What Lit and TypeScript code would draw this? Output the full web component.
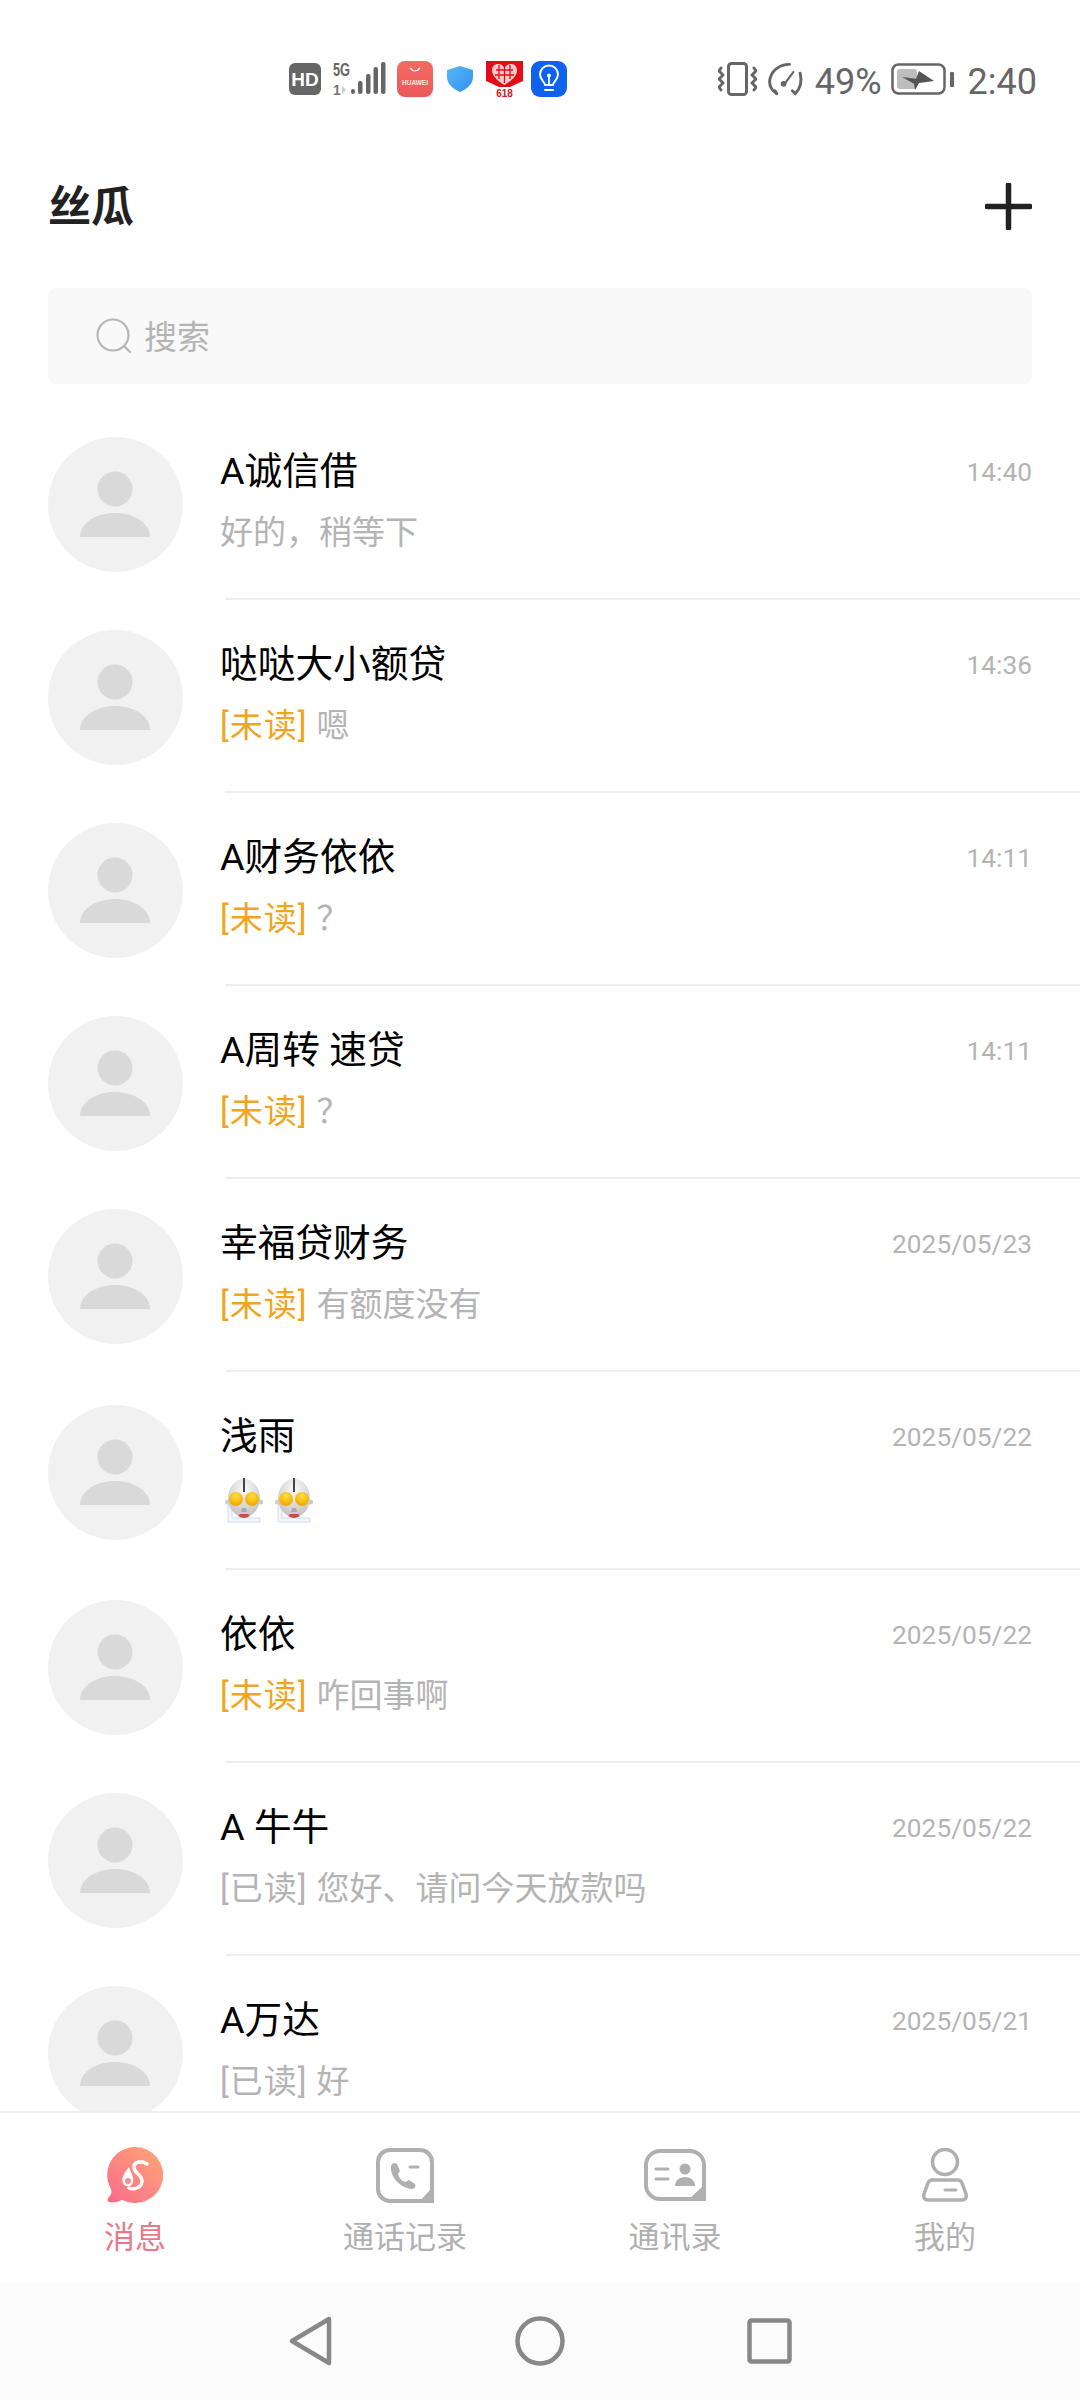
import { LitElement, html, css, svg, nothing } from 'lit';
import { customElement } from 'lit/decorators.js';

interface Chat {
  name: string;
  time: string;
  status?: 'unread' | 'read';
  text?: string;
  emoji?: boolean;
}

const chats: Chat[] = [
  { name: 'A诚信借', time: '14:40', text: '好的，稍等下' },
  { name: '哒哒大小额贷', time: '14:36', status: 'unread', text: '嗯' },
  { name: 'A财务依依', time: '14:11', status: 'unread', text: '？' },
  { name: 'A周转 速贷', time: '14:11', status: 'unread', text: '？' },
  { name: '幸福贷财务', time: '2025/05/23', status: 'unread', text: '有额度没有' },
  { name: '浅雨', time: '2025/05/22', emoji: true },
  { name: '依依', time: '2025/05/22', status: 'unread', text: '咋回事啊' },
  { name: 'A 牛牛', time: '2025/05/22', status: 'read', text: '您好、请问今天放款吗' },
  { name: 'A万达', time: '2025/05/21', status: 'read', text: '好' },
];

const avatar = html`<svg class="avatar" viewBox="0 0 135 135">
  <circle cx="67.5" cy="67.5" r="67.5" fill="#f1f1f1"></circle>
  <circle cx="67" cy="52" r="17.5" fill="#d9d9d9"></circle>
  <path d="M32 100c0-14 16-24 35-24s35 10 35 24z" fill="#d9d9d9"></path>
</svg>`;

const ultraman = svg`<svg class="emoji" viewBox="0 0 38 45">
  <defs>
    <radialGradient id="head" cx="50%" cy="25%" r="75%">
      <stop offset="0" stop-color="#fafafa"></stop>
      <stop offset="1" stop-color="#c2c2c2"></stop>
    </radialGradient>
    <radialGradient id="eye" cx="50%" cy="30%" r="65%">
      <stop offset="0" stop-color="#ffe040"></stop>
      <stop offset="1" stop-color="#f5a800"></stop>
    </radialGradient>
  </defs>
  <path d="M3 26h4v14h28v4H3z" fill="#f2f5fa" stroke="#c8d6ea" stroke-width="0.800"></path>
  <circle cx="2.500" cy="24" r="2.500" fill="#d0d0d0"></circle>
  <circle cx="35.500" cy="24" r="2.500" fill="#c8c8c8"></circle>
  <ellipse cx="19" cy="20" rx="16" ry="19" fill="url(#head)"></ellipse>
  <rect x="18" y="0" width="2" height="14" fill="#444"></rect>
  <circle cx="11" cy="21" r="7" fill="url(#eye)"></circle>
  <circle cx="27" cy="21" r="7" fill="url(#eye)"></circle>
  <path d="M17 30h4l1 4h-6z" fill="#aaa"></path>
  <path d="M13 38q6 4 12 0l-2-2h-8z" fill="#cf4a49"></path>
</svg>`;

@customElement('app-root')
export class AppRoot extends LitElement {
  static styles = css`
    :host {
      display: flex;
      flex-direction: column;
      width: 1080px;
      height: 2400px;
      overflow: hidden;
      background: #fff;
      font-family: 'Roboto', 'Noto Sans CJK SC', sans-serif;
    }
    svg {
      display: block;
      flex: none;
    }

    .status {
      display: flex;
      align-items: center;
      height: 158px;
      padding: 0 43px 0 289px;
      box-sizing: border-box;
      color: #666;
      font-size: 36px;
      flex: none;
    }
    .status-left {
      display: flex;
      align-items: center;
    }
    .signal {
      margin-left: 12px;
    }
    .huawei {
      margin-left: 11px;
    }
    .shield {
      margin-left: 14px;
    }
    .red {
      margin-left: 13px;
    }
    .bulb {
      margin-left: 8px;
    }
    .status-right {
      display: flex;
      align-items: center;
      margin-left: auto;
    }
    .gauge {
      margin-left: 11px;
    }
    .pct {
      margin: 5px 9px 0 10px;
    }
    .clock {
      margin: 5px 0 0 14px;
    }

    .title-row {
      display: flex;
      align-items: center;
      justify-content: space-between;
      height: 96px;
      padding: 0 48px;
      flex: none;
    }
    .title {
      font-size: 43px;
      font-weight: 700;
      color: #222;
      margin-bottom: 6px;
    }

    .search {
      display: flex;
      align-items: center;
      gap: 12px;
      height: 96px;
      margin: 34px 48px 0;
      padding-left: 48px;
      border-radius: 8px;
      background: #f9f9f9;
      color: #b4b4b4;
      font-size: 33px;
      flex: none;
    }
    .search span {
      margin-bottom: 3px;
    }

    .list {
      flex: 1;
      min-height: 0;
      overflow: hidden;
      margin-top: 23px;
    }
    .row {
      display: flex;
      align-items: center;
      padding: 30px 48px 28px;
      position: relative;
    }
    .row::after {
      content: '';
      position: absolute;
      left: 225px;
      right: 0;
      bottom: 0;
      height: 2px;
      background: #eeeeee;
    }
    .avatar {
      width: 135px;
      height: 135px;
    }
    .body {
      flex: 1;
      align-self: flex-start;
      margin: 4px 0 0 37px;
      min-width: 0;
    }
    .top {
      display: flex;
      justify-content: space-between;
      align-items: flex-start;
      height: 50px;
      line-height: 50px;
    }
    .name {
      margin-top: 5px;
      font-size: 37.7px;
      color: #000;
    }
    .time {
      margin-top: 6px;
      font-size: 26.3px;
      color: #b4b4b4;
    }
    .preview {
      height: 78px;
      display: flex;
      align-items: center;
      font-size: 33px;
      color: #b4b4b4;
      gap: 9px;
    }
    .tag {
      letter-spacing: 1px;
    }
    .preview.emoji-line {
      height: 64px;
      padding-top: 22px;
      align-items: flex-start;
      gap: 12px;
      margin-left: 5px;
    }
    .emoji {
      width: 38px;
      height: 45px;
    }
    .unread {
      color: #f0a51e;
    }

    .tabs {
      display: grid;
      grid-template-columns: repeat(4, 1fr);
      height: 170px;
      border-top: 2px solid #eeeeee;
      flex: none;
      box-sizing: content-box;
    }
    .tab {
      display: flex;
      flex-direction: column;
      align-items: center;
      color: #b0b0b0;
      font-size: 31px;
    }
    .tab .icon {
      height: 58px;
      margin-top: 33px;
      display: flex;
      align-items: center;
    }
    .tab .label {
      margin-top: 14px;
      line-height: 40px;
    }
    .tab.active {
      color: #e8788a;
    }

    .nav {
      display: flex;
      align-items: center;
      justify-content: center;
      gap: 182px;
      height: 117px;
      padding-bottom: 2px;
      box-sizing: border-box;
      background: #fbfbfb;
      flex: none;
    }
  `;

  renderStatusLeft() {
    return html`<div class="status-left">
      <svg width="32" height="32" viewBox="0 0 32 32">
        <rect width="32" height="32" rx="6" fill="#666"></rect>
        <text x="16" y="23" font-size="19" font-weight="700" fill="#fff" text-anchor="middle" font-family="Liberation Sans">HD</text>
      </svg>
      <svg class="signal" width="53" height="36" viewBox="0 0 53 36">
        <text x="0" y="15" font-size="18" font-weight="700" fill="#666" font-family="Liberation Sans" textLength="17" lengthAdjust="spacingAndGlyphs">5G</text>
        <text x="0" y="34" font-size="14" font-weight="700" fill="#777" font-family="Liberation Sans">1</text>
        <path d="M9 25l4 4-4 4z" fill="#ccc"></path>
        <rect x="18" y="28" width="4" height="5" rx="2" fill="#666"></rect>
        <rect x="25" y="20" width="4.500" height="13" rx="2" fill="#666"></rect>
        <rect x="33" y="13" width="4.500" height="20" rx="2" fill="#666"></rect>
        <rect x="40.500" y="6" width="4.500" height="27" rx="2" fill="#666"></rect>
        <rect x="48" y="1" width="4.500" height="32" rx="2" fill="#666"></rect>
      </svg>
      <svg class="huawei" width="36" height="36" viewBox="0 0 36 36">
        <defs>
          <linearGradient id="hw" x1="0" y1="0" x2="0" y2="1">
            <stop offset="0" stop-color="#f66a63"></stop>
            <stop offset="1" stop-color="#e9585a"></stop>
          </linearGradient>
        </defs>
        <rect width="36" height="36" rx="8" fill="url(#hw)"></rect>
        <path d="M13 7q5 6 10 0" fill="none" stroke="#fff" stroke-width="1.200"></path>
        <text x="18" y="24" font-size="6.500" font-weight="700" fill="#fde4e2" text-anchor="middle" font-family="Liberation Sans">HUAWEI</text>
      </svg>
      <svg class="shield" width="26" height="26" viewBox="8 6 26 26">
        <defs>
          <linearGradient id="sh" x1="0" y1="0" x2="1" y2="1">
            <stop offset="0" stop-color="#5cb8f6"></stop>
            <stop offset="1" stop-color="#2f8fef"></stop>
          </linearGradient>
        </defs>
        <path d="M21 6l13 4v7c0 7-6 12-13 15C14 29 8 24 8 17v-7z" fill="url(#sh)"></path>
      </svg>
      <svg class="red" width="37" height="36" viewBox="0 0 37 36">
        <path d="M0 0h37v20l-13 6h-11L0 20z" fill="#e30d18"></path>
        <path d="M18.500 24C10 19 6 14 6 9.500 6 5 9 3 12 3c3 0 5 1.500 6.500 4C20 4.500 22 3 25 3c3 0 6 2 6 6.500C31 14 27 19 18.500 24z" fill="#f7c9c9"></path>
        <path d="M18.500 5v17M10 9h17M9 14h19M13 4v14M24 4v14" stroke="#e30d18" stroke-width="1.300"></path>
        <text x="18.500" y="35.500" font-size="10" font-weight="700" fill="#d4141e" text-anchor="middle" font-family="Liberation Sans">618</text>
      </svg>
      <svg class="bulb" width="36" height="36" viewBox="0 0 36 36">
        <rect width="36" height="36" rx="9" fill="#0f62ee"></rect>
        <path d="M14 24c0-3-5-5-5-10.500a9 9 0 0 1 18 0C27 19 22 21 22 24z" fill="none" stroke="#fff" stroke-width="2" stroke-linejoin="round"></path>
        <path d="M14 29h8" stroke="#fff" stroke-width="2" stroke-linecap="round"></path>
        <path d="M18 23v-7" stroke="#fff" stroke-width="1.800"></path>
        <circle cx="18" cy="14.500" r="2" fill="#fff"></circle>
      </svg>
    </div>`;
  }

  renderStatusRight() {
    return html`<div class="status-right">
      <svg width="39" height="34" viewBox="0 0 39 34" fill="none" stroke="#666" stroke-width="3" stroke-linecap="round" stroke-linejoin="round">
        <rect x="10.500" y="1.500" width="18" height="31" rx="3"></rect>
        <path d="M3 6l-2 3 4 4-4 4 4 4-4 4 2 3"></path>
        <path d="M36 6l2 3-4 4 4 4-4 4 4 4-2 3"></path>
      </svg>
      <svg class="gauge" width="37" height="34" viewBox="0 0 38 34" fill="none" stroke="#666" stroke-width="3" stroke-linecap="round">
        <path d="M9 32C3 28 1 22 2 17 4 8 12 2 22 2"></path>
        <path d="M33 11c2 8 1 15-5 21l-3-3"></path>
        <path d="M9 32l-2-3"></path>
        <path d="M17 22L26 10" stroke-width="2.200"></path>
        <circle cx="16" cy="22" r="3" fill="#666" stroke="none"></circle>
      </svg>
      <span class="pct">49%</span>
      <svg width="63" height="32" viewBox="0 0 63 32">
        <rect x="1.500" y="1.500" width="52" height="29" rx="6" fill="none" stroke="#666" stroke-width="2.500"></rect>
        <rect x="6" y="6" width="20" height="20" rx="3" fill="#bdbdbd"></rect>
        <path d="M11 14l14 1.700 3-7.700 15 10-15 2-4 7-1-6.300z" fill="#555"></path>
        <rect x="59" y="9" width="4" height="15" rx="1" fill="#666"></rect>
      </svg>
      <span class="clock">2:40</span>
    </div>`;
  }

  renderChat(c: Chat) {
    return html`<div class="row">
      ${avatar}
      <div class="body">
        <div class="top">
          <span class="name">${c.name}</span>
          <span class="time">${c.time}</span>
        </div>
        ${c.emoji
          ? html`<div class="preview emoji-line">${ultraman}${ultraman}</div>`
          : html`<div class="preview">
              ${c.status === 'unread' ? html`<span class="tag unread">[未读]</span>` : nothing}
              ${c.status === 'read' ? html`<span class="tag">[已读]</span>` : nothing}
              <span>${c.text}</span>
            </div>`}
      </div>
    </div>`;
  }

  render() {
    return html`
      <div class="status">${this.renderStatusLeft()}${this.renderStatusRight()}</div>

      <div class="title-row">
        <span class="title">丝瓜</span>
        <svg width="47" height="47" viewBox="0 0 47 47">
          <path d="M23.500 2v43M2 23.500h43" stroke="#222" stroke-width="5.500" stroke-linecap="round"></path>
        </svg>
      </div>

      <div class="search">
        <svg width="36" height="36" viewBox="0 0 36 36" fill="none" stroke="#b6b6b6" stroke-width="2.200">
          <circle cx="17" cy="17" r="15.500"></circle>
          <path d="M28 28l6 6" stroke-linecap="round"></path>
        </svg>
        <span>搜索</span>
      </div>

      <div class="list">${chats.map((c) => this.renderChat(c))}</div>

      <div class="tabs">
        <div class="tab active">
          <div class="icon">
            <svg width="56" height="56" viewBox="0 0 56 56">
              <defs>
                <linearGradient id="msg" x1="0" y1="1" x2="1" y2="0">
                  <stop offset="0" stop-color="#fb6a8a"></stop>
                  <stop offset="1" stop-color="#ffa878"></stop>
                </linearGradient>
              </defs>
              <path d="M28 0a28 28 0 1 1-13 52.700C11 55 5 56 2 55c-2-1-2-3 0-5 2-2 3-5 2-8A28 28 0 0 1 28 0z" fill="url(#msg)"></path>
              <path d="M40 17C34 13 26 15 27 21C28 27 36 28 35 35C34 41 27 43 22 41" fill="none" stroke="#fff" stroke-width="3.500" stroke-linecap="round"></path>
              <path d="M22 20C17 26 14 31 16 36C18 41 25 40 26 35C27 30 24 26 22 20z" fill="#fff"></path>
              <circle cx="21" cy="34" r="3" fill="#fb8a90"></circle>
            </svg>
          </div>
          <div class="label">消息</div>
        </div>
        <div class="tab">
          <div class="icon">
            <svg width="58" height="55" viewBox="0 0 58 55" fill="none" stroke="#b0b0b0" stroke-width="4">
              <path d="M14 2h30a12 12 0 0 1 12 12v39H14A12 12 0 0 1 2 41V14A12 12 0 0 1 14 2z"></path>
              <path d="M56 40v15H42z" fill="#b0b0b0" stroke="none"></path>
              <path d="M15 18c-1 12 10 22 21 23 3 0 4-3 3-5l-6-4-4 2c-3-1-6-4-7-8l2-3-3-7c-2-2-5-1-6 2z" fill="#b0b0b0" stroke="none"></path>
              <path d="M34 19h8" stroke-width="3" stroke-linecap="round"></path>
            </svg>
          </div>
          <div class="label">通话记录</div>
        </div>
        <div class="tab">
          <div class="icon">
            <svg width="62" height="52" viewBox="0 0 62 52" fill="none" stroke="#b0b0b0" stroke-width="4">
              <path d="M16 2h30a14 14 0 0 1 14 14v34H16A14 14 0 0 1 2 36V16A14 14 0 0 1 16 2z"></path>
              <path d="M60 36v15H44z" fill="#b0b0b0" stroke="none"></path>
              <path d="M12 20h12M12 30h12" stroke-width="3" stroke-linecap="round"></path>
              <circle cx="41" cy="20" r="5.500" fill="#b0b0b0" stroke="none"></circle>
              <path d="M31 37c0-6 5-9 10-9s10 3 10 9z" fill="#b0b0b0" stroke="none"></path>
            </svg>
          </div>
          <div class="label">通讯录</div>
        </div>
        <div class="tab">
          <div class="icon">
            <svg width="46" height="54" viewBox="0 0 46 54" fill="none" stroke="#b0b0b0" stroke-width="3.500">
              <circle cx="23" cy="14" r="12.500"></circle>
              <path d="M10 32h26c2 0 3 1 4 3l4 11c1 4-1 6-4 6H6c-3 0-5-2-4-6l4-11c1-2 2-3 4-3z"></path>
              <path d="M23 42h11" stroke-width="3" stroke-linecap="round"></path>
            </svg>
          </div>
          <div class="label">我的</div>
        </div>
      </div>

      <div class="nav">
        <svg width="44" height="50" viewBox="0 0 44 50">
          <path d="M40 3L3 25l37 22z" fill="none" stroke="#888" stroke-width="4.500" stroke-linejoin="round"></path>
        </svg>
        <svg width="50" height="50" viewBox="0 0 50 50">
          <circle cx="25" cy="25" r="22.500" fill="none" stroke="#888" stroke-width="4.500"></circle>
        </svg>
        <svg width="45" height="46" viewBox="0 0 45 46">
          <rect x="2.500" y="2.500" width="40" height="41" rx="2" fill="none" stroke="#888" stroke-width="4.500"></rect>
        </svg>
      </div>
    `;
  }
}
